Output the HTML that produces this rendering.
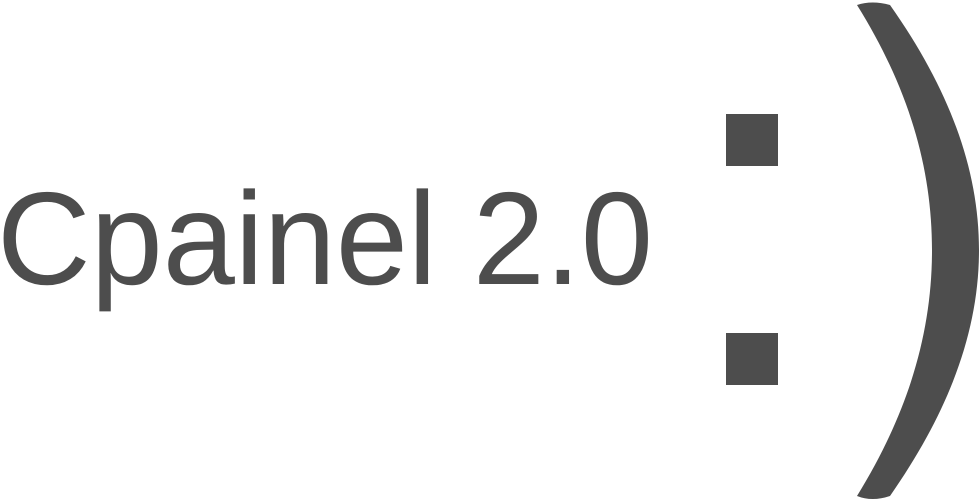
<!DOCTYPE html>
<html><head><style>
html,body{margin:0;padding:0;background:#fff;width:980px;height:501px;overflow:hidden}
</style></head><body>
<svg width="980" height="501" viewBox="0 0 980 501" xmlns="http://www.w3.org/2000/svg">
<text x="-3" y="284" font-family="Liberation Sans, Arial, sans-serif" font-size="132" fill="#4d4d4d" textLength="656" lengthAdjust="spacingAndGlyphs">Cpainel 2.0</text>
<rect x="726" y="114" width="52" height="52" fill="#4d4d4d"/>
<rect x="726" y="333" width="52" height="52" fill="#4d4d4d"/>
<path d="M857,5 Q872,0 890,5 C950,90 979,170 979,250 C979,330 950,410 890,496 Q872,502 857,496 C910,410 932,330 932,250 C932,170 910,90 857,5 Z" fill="#4d4d4d"/>
</svg>
</body></html>
